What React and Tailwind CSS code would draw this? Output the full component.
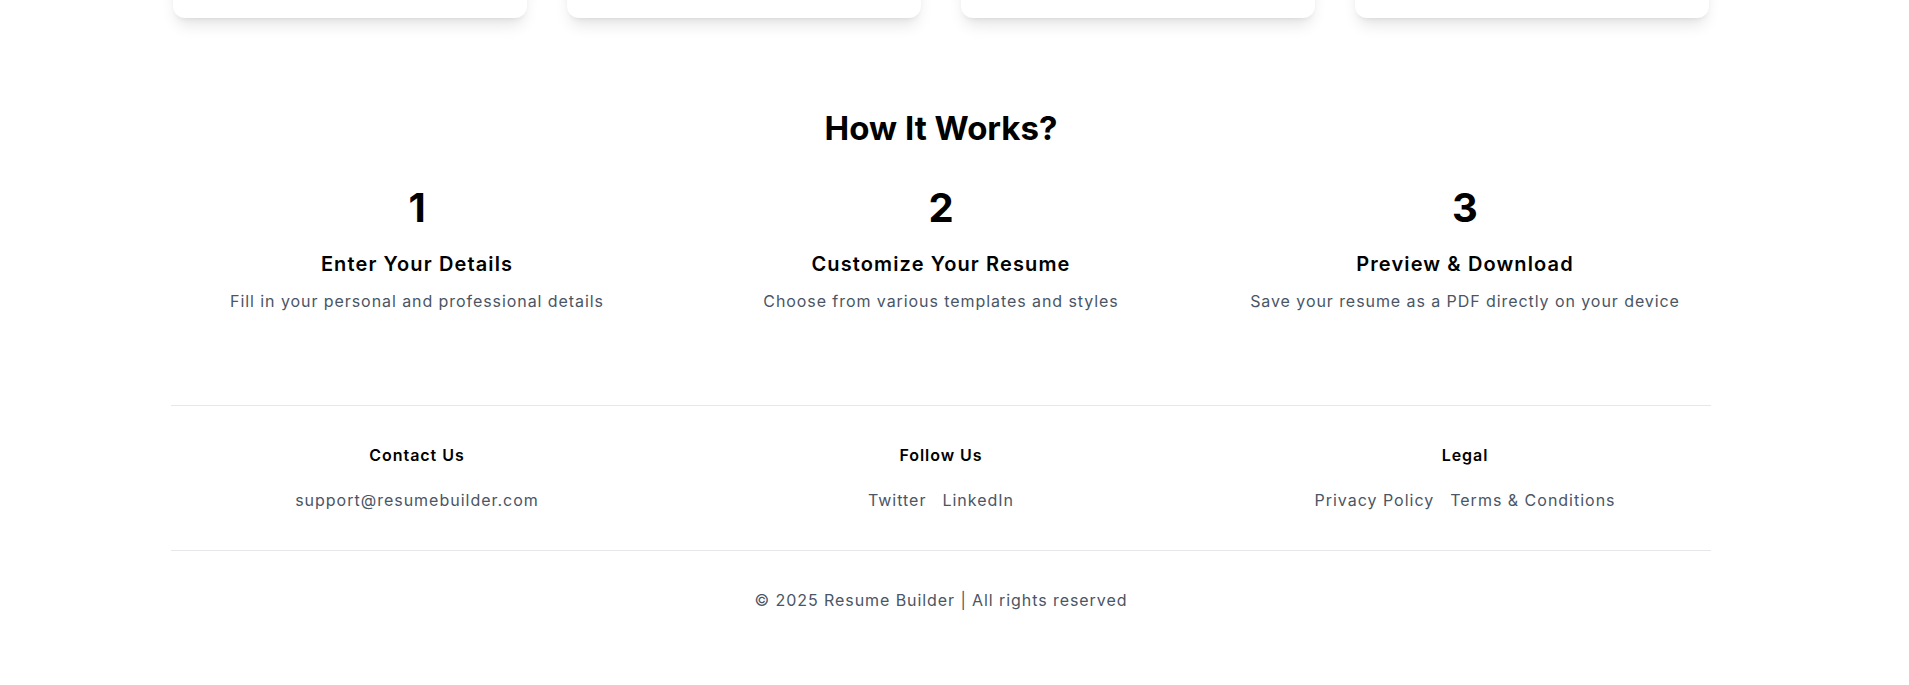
import { useEffect } from 'react';

const steps = [
  { number: '1', title: 'Enter Your Details', text: 'Fill in your personal and professional details' },
  { number: '2', title: 'Customize Your Resume', text: 'Choose from various templates and styles' },
  { number: '3', title: 'Preview & Download', text: 'Save your resume as a PDF directly on your device' },
];

const footerColumns = [
  { title: 'Contact Us', links: ['support@resumebuilder.com'] },
  { title: 'Follow Us', links: ['Twitter', 'LinkedIn'] },
  { title: 'Legal', links: ['Privacy Policy', 'Terms & Conditions'] },
];

const App = () => {
  useEffect(() => {
    // the page is looked at scrolled down to the footer
    window.scrollTo(0, document.documentElement.scrollHeight);
  }, []);

  return (
    <div className="min-h-screen bg-white pr-[27px] font-['Inter','Noto_Sans',sans-serif] text-black">
      <div className="mx-auto w-[1540px]">
        <section className="grid grid-cols-4 gap-10 px-0.5 pt-8">
          {[0, 1, 2, 3].map((i) => (
            <div key={i} className="h-[199px] rounded-xl bg-white shadow-lg" />
          ))}
        </section>

        <section className="pt-[90px]">
          <h2 className="text-center text-[33px] font-bold leading-[40px]">How It Works?</h2>
          <div className="mt-9 grid grid-cols-3 gap-8">
            {steps.map((step) => (
              <div key={step.number} className="text-center">
                <div className="text-[40px] font-bold leading-[48px]">{step.number}</div>
                <h3 className="mt-[18px] text-xl font-semibold tracking-[0.056em]">{step.title}</h3>
                <p className="mt-[11px] text-base tracking-[0.058em] text-gray-600">{step.text}</p>
              </div>
            ))}
          </div>
        </section>

        <footer className="mt-[92px] border-t border-gray-200">
          <div className="grid grid-cols-3 gap-8 pt-[37px] pb-[38px]">
            {footerColumns.map((col) => (
              <div key={col.title} className="text-center">
                <h4 className="text-base font-semibold tracking-[0.06em]">{col.title}</h4>
                <div className="mt-[21px] flex justify-center gap-4">
                  {col.links.map((link) => (
                    <a key={link} href="#" className="text-base tracking-[0.062em] text-gray-600 hover:text-gray-900">
                      {link}
                    </a>
                  ))}
                </div>
              </div>
            ))}
          </div>
          <div className="border-t border-gray-200 pt-[37px] pb-[73px] text-center text-base tracking-[0.058em] text-gray-600">
            © 2025 Resume Builder | All rights reserved
          </div>
        </footer>
      </div>
    </div>
  );
};

export default App;
